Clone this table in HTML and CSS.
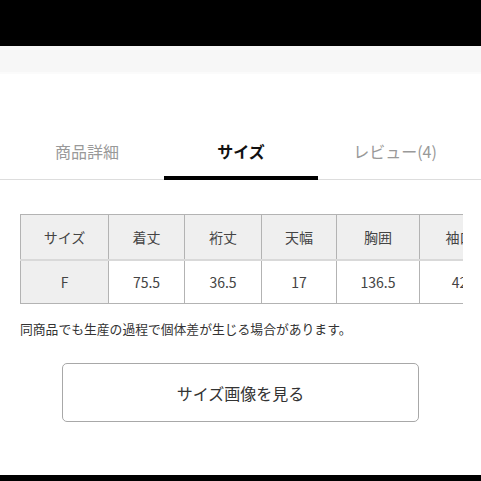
FILE: index.html
```html
<!DOCTYPE html>
<html lang="ja">
<head>
<meta charset="utf-8">
<link rel="stylesheet" href="styles.css">
</head>
<body>
<div class="topbar"></div>
<div class="subbar"></div>
<nav class="tabs">
  <div class="tab">商品詳細</div>
  <div class="tab active">サイズ</div>
  <div class="tab">レビュー(4)</div>
</nav>
<div class="table-wrap">
  <table class="size-table">
    <colgroup>
      <col class="c1"><col class="c2"><col class="c3"><col class="c4"><col class="c5"><col class="c6">
    </colgroup>
    <thead>
      <tr><th>サイズ</th><th>着丈</th><th>裄丈</th><th>天幅</th><th>胸囲</th><th>袖口</th></tr>
    </thead>
    <tbody>
      <tr><th>F</th><td>75.5</td><td>36.5</td><td>17</td><td>136.5</td><td>42</td></tr>
    </tbody>
  </table>
</div>
<p class="note">同商品でも生産の過程で個体差が生じる場合があります。</p>
<div class="btn-row"><button class="btn">サイズ画像を見る</button></div>
<div class="bottombar"></div>
</body>
</html>
```
FILE: styles.css
```css
html, body {
  margin: 0;
  padding: 0;
  background: #fff;
  font-family: "Noto Sans CJK JP", "Noto Sans", sans-serif;
  color: #333;
  width: 481px;
  height: 481px;
  overflow: hidden;
}
.topbar {
  height: 46px;
  background: #000;
}
.subbar {
  height: 26px;
  background: #f7f7f7;
  border-bottom: 2px solid #fbfbfb;
}
.tabs {
  display: flex;
  margin-top: 63px;
  padding: 0 9px 0 10px;
  border-bottom: 1px solid #dddddd;
}
.tab {
  flex: 1;
  text-align: center;
  font-size: 16px;
  line-height: 28px;
  padding-bottom: 11px;
  border-bottom: 4px solid transparent;
  margin-bottom: -1px;
  color: #999;
}
.tab.active {
  color: #111;
  font-weight: 700;
  border-bottom-color: #000;
}
.table-wrap {
  margin: 34px 18px 0 20px;
  overflow: hidden;
}
.size-table {
  border-collapse: collapse;
  table-layout: fixed;
  width: 479px;
  font-size: 14px;
  color: #444;
}
.c1 { width: 88px; }
.c2 { width: 76px; }
.c3 { width: 77px; }
.c4 { width: 75px; }
.c5 { width: 83px; }
.c6 { width: 80px; }
.size-table th,
.size-table td {
  border: 1px solid #b3b3b3;
  text-align: center;
  font-weight: 400;
  padding: 0;
}
.size-table thead th {
  height: 44px;
  background: #efefef;
  border-bottom: 2px solid #d9d9d9;
}
.size-table tbody th,
.size-table tbody td {
  height: 42px;
}
.size-table tbody th {
  background: #efefef;
}
.note {
  margin: 16px 0 0 20px;
  font-size: 12.8px;
  line-height: 18px;
  color: #333;
}
.btn-row {
  display: flex;
  justify-content: center;
  margin-top: 25px;
}
.btn {
  width: 357px;
  height: 59px;
  border: 1px solid #a8a8a8;
  border-radius: 5px;
  background: #fff;
  font-family: "Noto Sans CJK JP", "Noto Sans", sans-serif;
  font-size: 16px;
  color: #333;
  padding: 0;
}
.bottombar {
  margin-top: 53px;
  height: 7px;
  background: #000;
}
```
